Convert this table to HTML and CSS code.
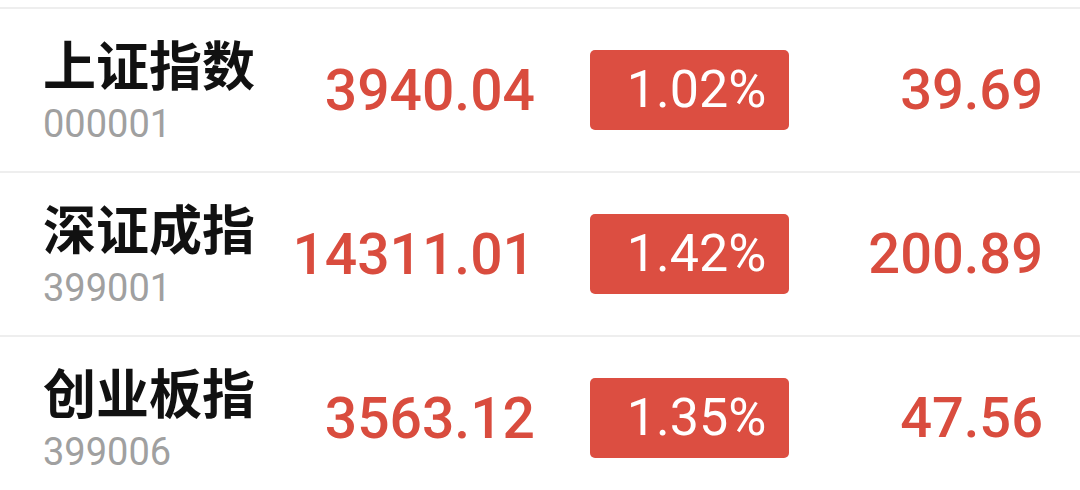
FILE: index.html
```html
<!DOCTYPE html>
<html lang="zh-CN">
<head>
    <meta charset="UTF-8">
    <meta name="viewport" content="width=device-width, initial-scale=1.0">
    <title>指数行情</title>
    <link rel="stylesheet" href="styles.css">
</head>
<body>

    <div class="list">
        <div class="row">
            <div class="name">
                <div class="title">上证指数</div>
                <div class="code">000001</div>
            </div>
            <div class="price">3940.04</div>
            <div class="badge">1.02%</div>
            <div class="change">39.69</div>
        </div>
        <div class="row">
            <div class="name">
                <div class="title">深证成指</div>
                <div class="code">399001</div>
            </div>
            <div class="price">14311.01</div>
            <div class="badge">1.42%</div>
            <div class="change">200.89</div>
        </div>
        <div class="row">
            <div class="name">
                <div class="title">创业板指</div>
                <div class="code">399006</div>
            </div>
            <div class="price">3563.12</div>
            <div class="badge">1.35%</div>
            <div class="change">47.56</div>
        </div>
    </div>

</body>
</html>
```

FILE: styles.css
```css
* { margin: 0; padding: 0; box-sizing: border-box; }
body { background: #fff; font-family: Roboto, "Noto Sans CJK SC", sans-serif; overflow: hidden; }
.list { padding-top: 7px; }
.row { display: grid; grid-template-columns: 240px 252px 254px 1fr; align-items: center; height: 164px; padding: 0 37px 0 43px; border-top: 2px solid #eeeeee; }
.title { font-family: "Noto Sans CJK SC", sans-serif; font-weight: 700; font-size: 53px; line-height: 58px; color: #111; }
.code { margin-top: 10px; font-size: 38px; line-height: 44px; color: #a0a0a0; font-weight: 400; }
.price, .change { font-size: 57px; font-weight: 500; color: #d94c3e; text-align: right; }
.change { font-size: 56px; }
.badge { justify-self: end; width: 199px; height: 80px; line-height: 80px; background: #dc4e41; border-radius: 5px; color: #fff; font-size: 52px; font-weight: 400; text-align: center; padding-left: 14px; }
```
